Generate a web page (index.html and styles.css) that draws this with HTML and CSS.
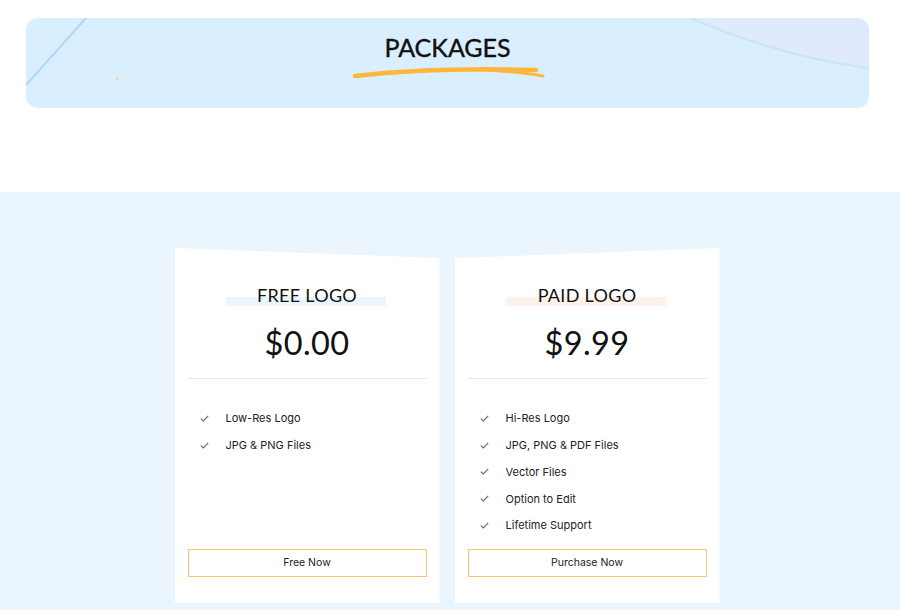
FILE: index.html
```html
<!DOCTYPE html>
<html lang="en">
<head>
  <meta charset="UTF-8">
  <title>Packages</title>
  <meta name="viewport" content="width=device-width, initial-scale=1.0">
  <link rel="stylesheet" href="styles.css">
</head>
<body>
  <!-- Banner tiêu đề -->
  <header class="banner">
    <svg class="banner-deco" viewBox="0 0 843 90" preserveAspectRatio="none">
      <path d="M664 0 Q760 40 843 50 L843 0 Z" fill="#dfeafc"/>
      <path d="M664 0 Q760 40 843 50" fill="none" stroke="#c9e4fb" stroke-width="2"/>
      <line x1="0" y1="67" x2="60" y2="0" stroke="#a9d8fb" stroke-width="2"/>
      <rect x="90" y="59" width="3" height="3" fill="#f3d9b8"/>
    </svg>
    <h1>PACKAGES</h1>
    <svg class="brush" width="196" height="16" viewBox="0 0 196 16">
      <path d="M3 12 Q 80 3 184 6" fill="none" stroke="#ffb63a" stroke-width="4.5" stroke-linecap="round"/>
      <path d="M70 6 Q 150 4 191 12" fill="none" stroke="#ffb63a" stroke-width="3" stroke-linecap="round"/>
    </svg>
  </header>

  <section class="pricing">
    <div class="plans">
      <div class="plan plan-free">
        <h3 class="plan-name">FREE LOGO</h3>
        <div class="price">$0.00</div>
        <hr>
        <ul class="features">
          <li><svg width="9" height="7" viewBox="0 0 9 7"><polyline points="0.8,3.6 3.3,6 8.2,0.8" fill="none" stroke="#55726f" stroke-width="1.1"/></svg>Low-Res Logo</li>
          <li><svg width="9" height="7" viewBox="0 0 9 7"><polyline points="0.8,3.6 3.3,6 8.2,0.8" fill="none" stroke="#55726f" stroke-width="1.1"/></svg>JPG &amp; PNG Files</li>
        </ul>
        <a class="btn" href="#">Free Now</a>
      </div>
      <div class="plan plan-paid">
        <h3 class="plan-name">PAID LOGO</h3>
        <div class="price">$9.99</div>
        <hr>
        <ul class="features">
          <li><svg width="9" height="7" viewBox="0 0 9 7"><polyline points="0.8,3.6 3.3,6 8.2,0.8" fill="none" stroke="#55726f" stroke-width="1.1"/></svg>Hi-Res Logo</li>
          <li><svg width="9" height="7" viewBox="0 0 9 7"><polyline points="0.8,3.6 3.3,6 8.2,0.8" fill="none" stroke="#55726f" stroke-width="1.1"/></svg>JPG, PNG &amp; PDF Files</li>
          <li><svg width="9" height="7" viewBox="0 0 9 7"><polyline points="0.8,3.6 3.3,6 8.2,0.8" fill="none" stroke="#55726f" stroke-width="1.1"/></svg>Vector Files</li>
          <li><svg width="9" height="7" viewBox="0 0 9 7"><polyline points="0.8,3.6 3.3,6 8.2,0.8" fill="none" stroke="#55726f" stroke-width="1.1"/></svg>Option to Edit</li>
          <li><svg width="9" height="7" viewBox="0 0 9 7"><polyline points="0.8,3.6 3.3,6 8.2,0.8" fill="none" stroke="#55726f" stroke-width="1.1"/></svg>Lifetime Support</li>
        </ul>
        <a class="btn" href="#">Purchase Now</a>
      </div>
    </div>
  </section>
</body>
</html>
```

FILE: styles.css
```css
* {
  margin: 0;
  padding: 0;
  box-sizing: border-box;
}
body {
  background: #fff;
  font-family: 'Lato', 'Noto Sans', sans-serif;
  color: #111;
  overflow: hidden;
}

/* Banner */
.banner {
  position: relative;
  margin: 18px 31px 0 26px;
  height: 90px;
  background: #daeffe;
  border-radius: 12px;
  overflow: hidden;
  display: flex;
  flex-direction: column;
  align-items: center;
  padding-top: 14px;
}
.banner-deco {
  position: absolute;
  top: 0; left: 0;
  width: 100%;
  height: 100%;
}
.banner h1 {
  position: relative;
  font-size: 25px;
  font-weight: 400;
  line-height: 30px;
  letter-spacing: 0;
  color: #111;
  -webkit-text-stroke: 0.4px #111;
}
.brush {
  position: relative;
  margin-top: 2px;
  margin-left: 4px;
}

/* Bảng giá */
.pricing {
  margin-top: 84px;
  background: #eaf5fe;
  min-height: 420px;
  padding: 56px 6px 7px 0;
}
.plans {
  display: flex;
  justify-content: center;
  gap: 15px;
}
.plan {
  width: 265px;
  height: 355px;
  background: #fff;
  display: flex;
  flex-direction: column;
  padding: 35px 13px 26px;
}
.plan-free {
  clip-path: polygon(0 0, 100% 10px, 100% 100%, 0 100%);
}
.plan-paid {
  clip-path: polygon(0 10px, 100% 0, 100% 100%, 0 100%);
}
.plan-name {
  position: relative;
  text-align: center;
  font-size: 18px;
  font-weight: 400;
  line-height: 24px;
  letter-spacing: 0.3px;
  z-index: 0;
}
.plan-name::before {
  content: "";
  position: absolute;
  left: 50%;
  bottom: 1px;
  width: 160px;
  height: 9px;
  margin-left: -81px;
  background: #eaf5fe;
  z-index: -1;
}
.plan-paid .plan-name::before {
  background: #fdf1ea;
}
.price {
  margin-top: 16px;
  text-align: center;
  font-size: 32.5px;
  line-height: 40px;
  letter-spacing: 0.4px;
}
hr {
  margin-top: 15px;
  border: none;
  border-top: 1px solid #e6e6e6;
}
.features {
  list-style: none;
  margin-top: 26px;
  padding-left: 12px;
  font-family: 'Inter', sans-serif;
  font-size: 11px;
  color: #222;
}
.features li {
  display: flex;
  align-items: center;
  height: 26.75px;
}
.features svg {
  margin-right: 17px;
}
.btn {
  margin-top: auto;
  display: block;
  height: 28px;
  line-height: 26px;
  border: 1px solid #fcc46c;
  text-align: center;
  font-family: 'Inter', sans-serif;
  font-size: 10.5px;
  color: #222;
  text-decoration: none;
}
```
